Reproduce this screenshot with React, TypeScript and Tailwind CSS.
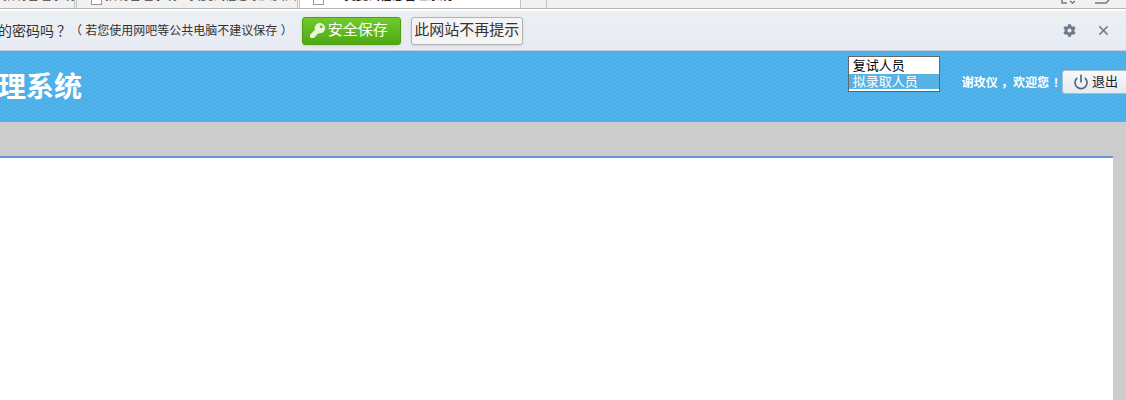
import { FaCog, FaKey } from 'react-icons/fa';
import { Power, X } from 'lucide-react';

const cjk = "font-['Liberation_Sans','Noto_Sans_CJK_SC',sans-serif]";

function TabStrip() {
  return (
    <div className="flex h-[9px] overflow-hidden border-b border-[#b5b5b5] bg-[#f1f1f1] text-xs text-[#444]">
      <div className="h-[8px] w-[75px] shrink-0 overflow-hidden border-r border-[#c4c4c4]">
        <div className="mt-[-12px] ml-[3px] whitespace-nowrap">招聘管理系统</div>
      </div>
      <div className="ml-[1px] flex h-[8px] w-[222px] shrink-0 items-start overflow-hidden border-x border-[#c4c4c4]">
        <span className="mt-[-3px] ml-[14px] h-[8px] w-[11px] shrink-0 border border-[#999] bg-white" />
        <div className="mt-[-12px] ml-[3px] whitespace-nowrap">招聘管理系统人员复试信息录入页面</div>
      </div>
      <div className="ml-[1px] flex h-[9px] w-[222px] shrink-0 items-start overflow-hidden border-x border-[#c4c4c4] bg-white">
        <span className="mt-[-3px] ml-[13px] h-[8px] w-[11px] shrink-0 border border-[#999] bg-white" />
        <div className="mt-[-12px] ml-[8px] whitespace-nowrap font-bold text-[#222]">人员复试信息管理系统</div>
      </div>
      <div className="h-[8px] w-[26px] shrink-0 border-r border-[#c4c4c4]" />
      <div className="ml-auto flex h-[8px] items-start gap-[20px] pr-[16px]">
        <svg width="14" height="4" viewBox="0 0 14 4" fill="none" stroke="#777" strokeWidth="1.5">
          <path d="M1 0v3h5M9 1l2.500 2L14 1" />
        </svg>
        <svg width="15" height="4" viewBox="0 0 15 4" fill="none" stroke="#777" strokeWidth="1.5">
          <path d="M0 3h11l3-3" />
        </svg>
      </div>
    </div>
  );
}

function InfoBar() {
  return (
    <div className="mt-[2px] flex h-[40px] items-center border-b border-[#c3cbd8] bg-gradient-to-b from-[#ebf0f3] to-[#e8ebf4]">
      <span className="ml-[-2px] text-sm whitespace-nowrap text-[#333]">
        的密码吗<span className="ml-[3px]">？</span>
      </span>
      <span className="ml-[-1px] text-xs whitespace-nowrap text-[#333]">（ 若您使用网吧等公共电脑不建议保存 ）</span>
      <button className="ml-[9px] flex h-[28px] w-[99px] items-center gap-[3px] rounded-[3px] border border-[#4f9e12] bg-gradient-to-b from-[#70cb2c] to-[#50a914] pl-[7px] text-[15px] whitespace-nowrap text-white shadow-sm">
        <FaKey className="h-[15px] w-[15px] shrink-0 text-[#e8f4dc]" />
        安全保存
      </button>
      <button className="ml-[10px] h-[28px] w-[112px] rounded-[3px] border border-[#b4b4b4] bg-[#f4f4f4] text-[15px] whitespace-nowrap text-[#333] shadow-sm">
        此网站不再提示
      </button>
      <FaCog className="ml-auto h-[13px] w-[13px] text-[#6b7b8e]" />
      <X className="mr-[15px] ml-[20px] h-[15px] w-[15px] text-[#6b7b8e]" strokeWidth={2.5} />
    </div>
  );
}

function Header() {
  return (
    <div className="flex h-[71px] items-start bg-[#4db1e9] bg-[conic-gradient(#49aee7_25%,#52b4eb_0_50%,#49aee7_0_75%,#52b4eb_0)] bg-[size:4px_4px]">
      <div className="mt-[17px] ml-[-2px] text-[28px] leading-[40px] font-bold whitespace-nowrap text-white">理系统</div>
      <div className="mt-[5px] ml-auto h-[36px] w-[92px] shrink-0 border border-[#666] bg-white text-[13px] leading-[16px]">
        <div className="h-[17px] pt-[1px] pl-[4px] text-black">复试人员</div>
        <div className="h-[15px] bg-[#57b3e3] pl-[4px] leading-[15px] text-white">拟录取人员</div>
      </div>
      <div className="mt-[23px] ml-[22px] text-xs leading-[18px] font-bold whitespace-nowrap text-white">
        谢玫仪 ，欢迎您<span className="ml-[5px]">!</span>
      </div>
      <button className="mt-[19px] mr-[-6px] ml-[4px] flex h-[24px] w-[70px] shrink-0 items-center gap-[3px] rounded-[3px] border border-[#a7bdd0] bg-gradient-to-b from-[#f7f8fa] to-[#e7eaee] pl-[10px] text-[13px] whitespace-nowrap text-[#222]">
        <Power className="h-[16px] w-[16px] shrink-0 text-[#4e6b85]" strokeWidth={2.5} />
        退出
      </button>
    </div>
  );
}

export default function App() {
  return (
    <div className={`flex h-[400px] w-[1126px] flex-col overflow-hidden bg-white ${cjk}`}>
      <TabStrip />
      <InfoBar />
      <Header />
      <div className="h-[34px] shrink-0 bg-[#cccccc]" />
      <div className="flex flex-1">
        <div className="flex-1 border-t-2 border-[#6b90e0] bg-white" />
        <div className="w-[13px] bg-[#cccccc]" />
      </div>
    </div>
  );
}
